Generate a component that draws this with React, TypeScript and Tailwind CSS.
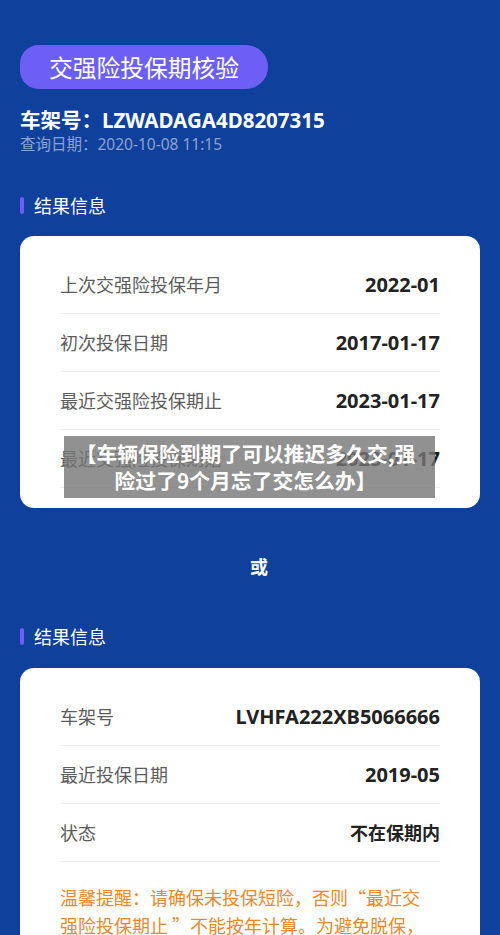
import React from 'react';

const firstRows = [
  { label: '上次交强险投保年月', value: '2022-01' },
  { label: '初次投保日期', value: '2017-01-17' },
  { label: '最近交强险投保期止', value: '2023-01-17' },
  { label: '最近交强险投保期始', value: '2023-01-17' },
];

const secondRows = [
  { label: '车架号', value: 'LVHFA222XB5066666' },
  { label: '最近投保日期', value: '2019-05' },
  { label: '状态', value: '不在保期内' },
];

const latin = { fontFamily: '"Noto Sans", "Noto Sans CJK SC", sans-serif' };

function SectionTitle({ children }: { children: React.ReactNode }) {
  return (
    <div className="flex items-center gap-[10px] h-6">
      <span className="w-1 h-[17px] rounded-sm bg-[#6d5ff5]" />
      <span className="text-[18px] leading-6 text-white">{children}</span>
    </div>
  );
}

function InfoRow({ label, value }: { label: string; value: string }) {
  // ascii values (dates, VIN) look a bit larger than the chinese ones
  const isAscii = /^[\x00-\x7f]+$/.test(value);
  return (
    <div className="flex items-center justify-between h-[58px] border-b border-[#eeeeee]">
      <span className="text-[18px] text-[#5c5c5c]">{label}</span>
      {isAscii ? (
        <span className="text-[20px] font-bold text-[#222222]" style={latin}>{value}</span>
      ) : (
        <span className="text-[18px] font-bold text-[#222222]">{value}</span>
      )}
    </div>
  );
}

export default function App() {
  return (
    <div
      className="relative w-[500px] h-[935px] overflow-hidden bg-[#0e409c] px-5 pt-[45px]"
      style={{ fontFamily: '"Noto Sans CJK SC", "Noto Sans", sans-serif' }}
    >
      {/* Header pill */}
      <div className="inline-flex items-center h-11 pl-[29px] pr-[29px] rounded-l-[22px] rounded-r-[26px] bg-[#6d5ff5]">
        <span className="text-[23.75px] text-white">交强险投保期核验</span>
      </div>

      <div className="mt-[18px] text-[20.5px] leading-[27px] font-bold text-white" style={latin}>
        车架号：LZWADAGA4D8207315
      </div>
      <div className="text-[15.5px] leading-5 text-[#8ea2cf]" style={latin}>查询日期：2020-10-08 11:15</div>

      {/* Section one */}
      <div className="mt-[39px]">
        <SectionTitle>结果信息</SectionTitle>
      </div>
      <div className="mt-[19px] bg-white rounded-[14px] px-10 pt-[20px] pb-[20px]">
        {firstRows.map((r) => (
          <InfoRow key={r.label} label={r.label} value={r.value} />
        ))}
      </div>

      <div className="mt-[46px] pl-[18px] text-center text-[18px] leading-6 font-bold text-white">或</div>

      {/* Section two */}
      <div className="mt-[46px]">
        <SectionTitle>结果信息</SectionTitle>
      </div>
      <div className="mt-[20px] bg-white rounded-[14px] px-10 pt-[20px] pb-6">
        {secondRows.map((r) => (
          <InfoRow key={r.label} label={r.label} value={r.value} />
        ))}
        <p className="pt-[21px] text-[18px] leading-[28px] text-[#e8892b]">
          温馨提醒：请确保未投保短险，否则“最近交
          <br />
          强险投保期止 ”不能按年计算。为避免脱保，
          <br />
          请在交强险到期前及时续保，避免影响出行。
        </p>
      </div>

      {/* Caption overlay */}
      <div className="absolute left-16 top-[436px] w-[371px] h-[62px] pr-2 bg-[rgba(118,118,118,0.8)] flex flex-col items-center justify-center">
        <span className="block text-[20.8px] leading-[27px] font-bold text-white whitespace-nowrap">【车辆保险到期了可以推迟多久交,强</span>
        <span className="block text-[20.8px] leading-[27px] font-bold text-white whitespace-nowrap">险过了9个月忘了交怎么办】</span>
      </div>
    </div>
  );
}
